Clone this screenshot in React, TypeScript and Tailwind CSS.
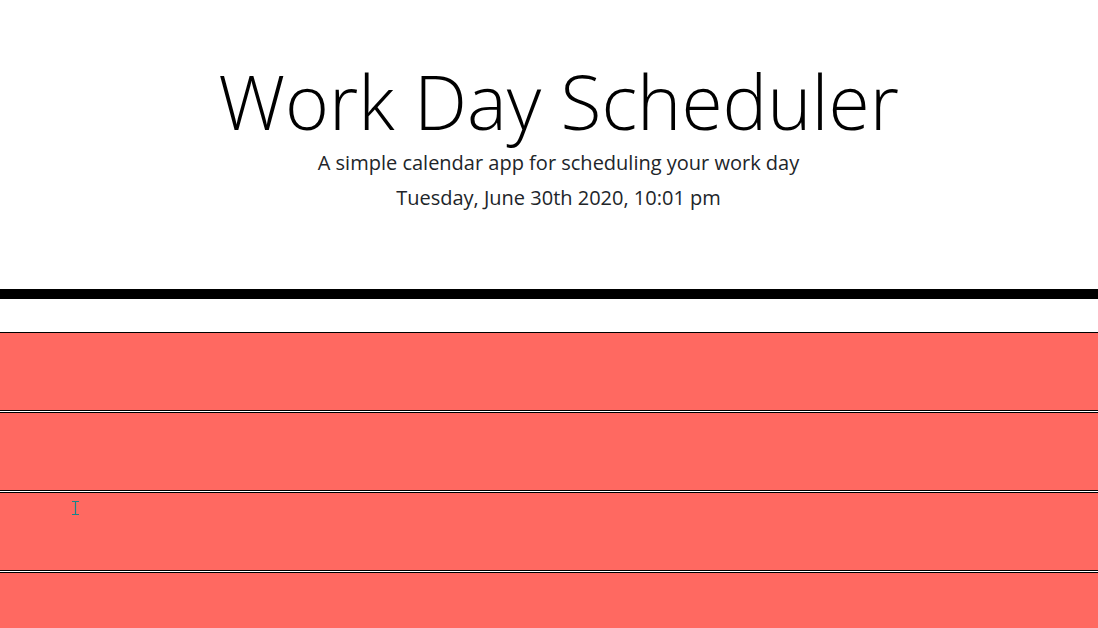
import React from "react";

export default function App() {
  const rows = [0, 1, 2, 3];
  return (
    <div className="relative min-h-[628px] bg-white overflow-hidden" style={{ fontFamily: '"Open Sans", "Liberation Sans", sans-serif' }}>
      <header className="text-center pt-[58px] pl-[19px] h-[299px] border-b-[10px] border-black">
        <h1 className="text-[75px] leading-[86px] font-light text-black whitespace-nowrap">Work Day Scheduler</h1>
        <p className="text-[20px] leading-[30px] font-normal text-[#212529] mt-[4px]">A simple calendar app for scheduling your work day</p>
        <p className="text-[20px] leading-[30px] font-normal text-[#212529] mt-[5px]">Tuesday, June 30th 2020, 10:01 pm</p>
      </header>
      <div className="mt-[33px] flex flex-col">
        {rows.map((r) => (
          <div key={r} className="h-[79px] border-y border-black bg-[#ff6961] mb-px" />
        ))}
      </div>
      <svg className="absolute left-[72px] top-[500px]" width="8" height="16" viewBox="0 0 8 16">
        <path d="M0 1.5H7M3.5 1.5V14.5M0 14.5H7" stroke="#17868a" strokeWidth="1.2" fill="none" />
      </svg>
    </div>
  );
}
